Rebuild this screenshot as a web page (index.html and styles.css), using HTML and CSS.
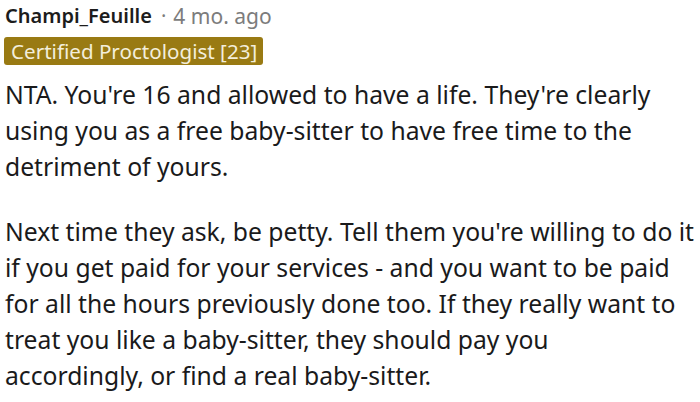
FILE: index.html
```html
<!DOCTYPE html>
<html>
<head>
<meta charset="utf-8">
<link rel="stylesheet" href="styles.css">
</head>
<body>
<div class="comment">
  <div class="meta">
    <span class="author">Champi_Feuille</span>
    <span class="dot">·</span>
    <span class="time">4 mo. ago</span>
  </div>
  <div class="flair-row"><span class="flair">Certified Proctologist [23]</span></div>
  <div class="body">
    <p>NTA. You're 16 and allowed to have a life. They're clearly using you as a free baby-sitter to have free time to the detriment of yours.</p>
    <p>Next time they ask, be petty. Tell them you're willing to do it if you get paid for your services - and you want to be paid for all the hours previously done too. If they really want to treat you like a baby-sitter, they should pay you accordingly,&nbsp;or find a real baby-sitter.</p>
  </div>
</div>
</body>
</html>
```
FILE: styles.css
```css
html, body {
  margin: 0;
  padding: 0;
  background: #ffffff;
}
.comment {
  padding: 0 4px 0 5px;
  width: 691px;
}
.meta {
  font-family: "Noto Sans", sans-serif;
  font-size: 20px;
  line-height: 32px;
  height: 32px;
  display: flex;
  align-items: center;
}
.author {
  color: #1c1c1c;
  font-weight: 600;
}
.dot {
  color: #7c7c7c;
  margin: 0 7px 0 9px;
}
.time {
  color: #7c7c7c;
  font-size: 21px;
}
.flair-row {
  display: flex;
  margin-top: 5px;
}
.flair {
  font-family: "Noto Sans", sans-serif;
  font-size: 20.6px;
  line-height: 28px;
  background: #997a13;
  color: #f3eedb;
  padding: 0 6px 0 7px;
  border-radius: 3px;
  margin-left: -1px;
}
.body {
  font-family: "Noto Sans", sans-serif;
  font-size: 24.7px;
  line-height: 36px;
  color: #1a1a1b;
  margin-top: 12px;
}
.body p {
  margin: 0 0 29px 0;
}
.body p:last-child {
  margin-bottom: 0;
}
```
